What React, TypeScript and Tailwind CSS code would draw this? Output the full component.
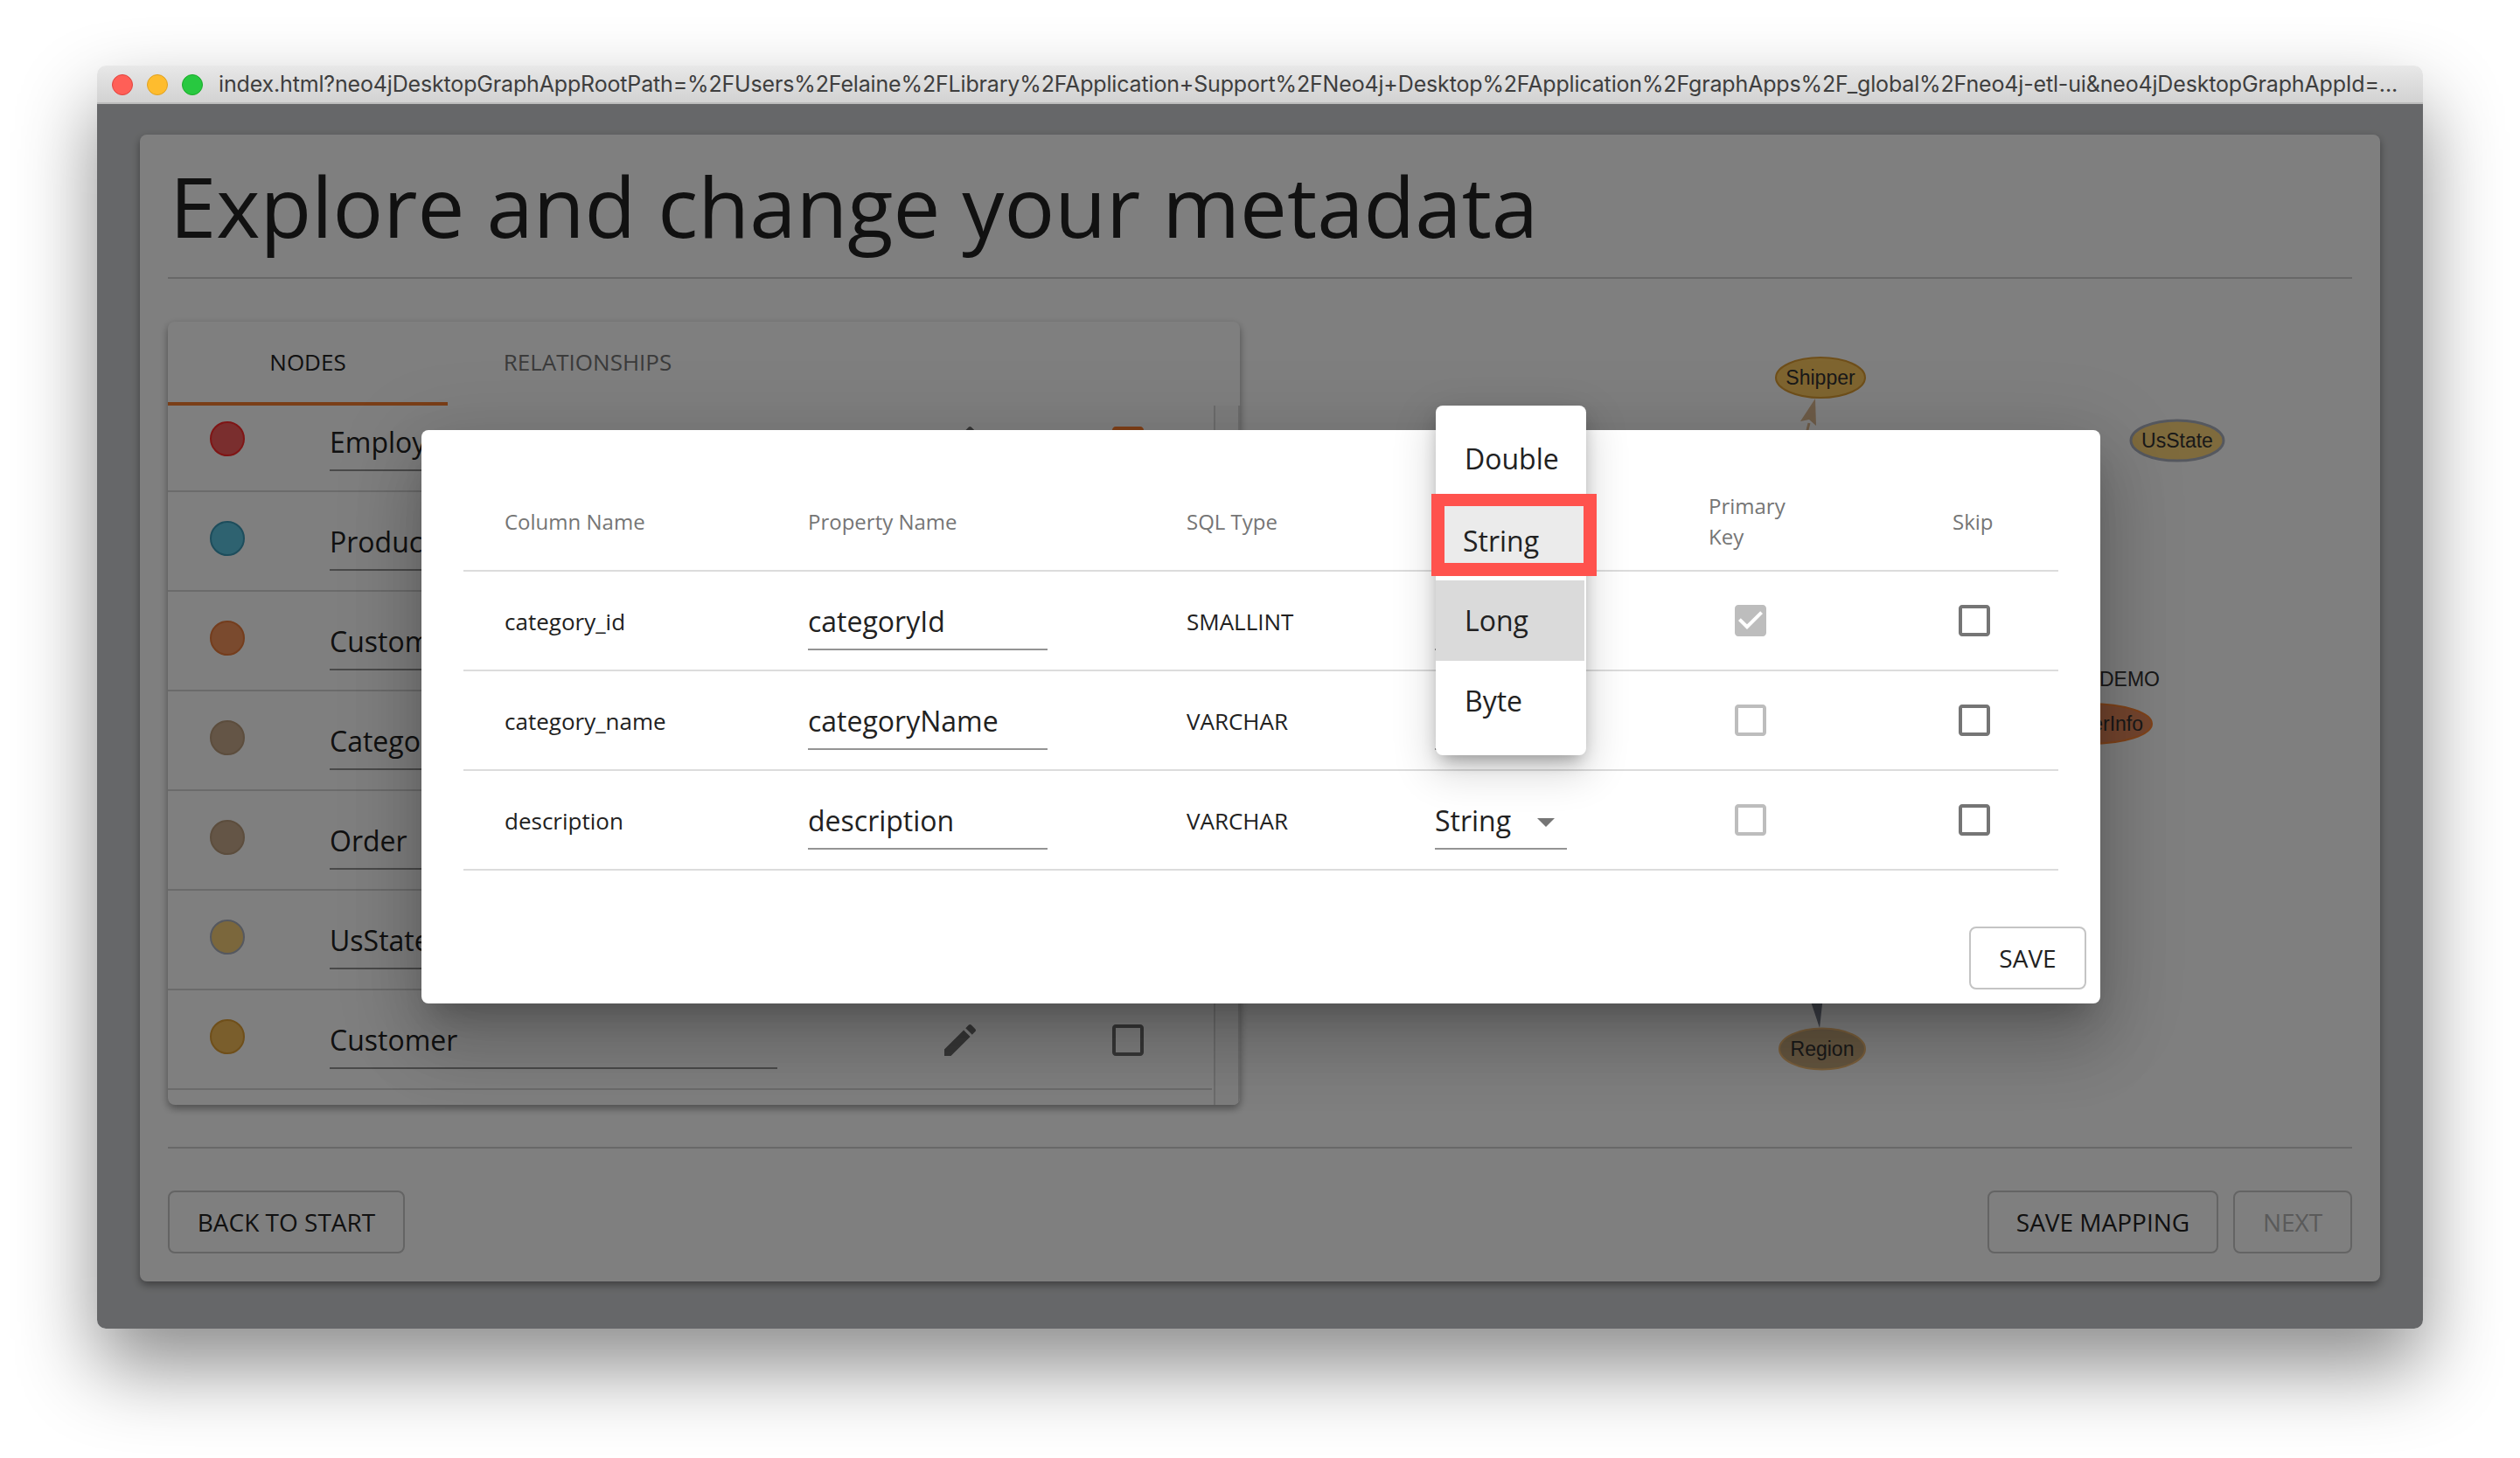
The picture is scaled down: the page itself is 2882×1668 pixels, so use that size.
const nodes = [
  { name: 'Employee', dot: 'bg-[#f45c5c] border-[#ff2a2a]', checked: true },
  { name: 'Product', dot: 'bg-[#5cc4e0] border-[#3a9ab8]', checked: false },
  { name: 'CustomerInfo', dot: 'bg-[#f4945c] border-[#e87a3a]', checked: false },
  { name: 'Category', dot: 'bg-[#c8aa8c] border-[#b89a7a]', checked: false },
  { name: 'Order', dot: 'bg-[#c8aa8c] border-[#b89a7a]', checked: false },
  { name: 'UsState', dot: 'bg-[#f6cf78] border-[#aab0be]', checked: false },
  { name: 'Customer', dot: 'bg-[#f5bc58] border-[#de9e34]', checked: false },
]

const columns = [
  { column: 'category_id', property: 'categoryId', sql: 'SMALLINT', primary: true },
  { column: 'category_name', property: 'categoryName', sql: 'VARCHAR', primary: false },
  { column: 'description', property: 'description', sql: 'VARCHAR', primary: false },
]

const EMPTY_BOX = 'M19 5v14H5V5h14m0-2H5c-1.1 0-2 .9-2 2v14c0 1.1.9 2 2 2h14c1.1 0 2-.9 2-2V5c0-1.1-.9-2-2-2z'
const CHECKED_BOX = 'M19 3H5c-1.11 0-2 .9-2 2v14c0 1.1.89 2 2 2h14c1.11 0 2-.89 2-2V5c0-1.1-.89-2-2-2zm-9 14l-5-5 1.41-1.41L10 14.17l7.59-7.59L19 8l-9 9z'
const PENCIL = 'M3 17.25V21h3.75L17.81 9.94l-3.75-3.75L3 17.25zM20.71 7.04c.39-.39.39-1.02 0-1.41l-2.34-2.34c-.39-.39-1.02-.39-1.41 0l-1.83 1.83 3.75 3.75 1.83-1.83z'

function Icon({ d, className }: { d: string; className: string }) {
  return (
    <svg viewBox="0 0 24 24" className={`h-[48px] w-[48px] shrink-0 fill-current ${className}`}>
      <path d={d} />
    </svg>
  )
}

function Graph() {
  return (
    <svg viewBox="1418 368 1272 896" className="h-[896px] w-[1272px] shrink-0 font-['Liberation_Sans',sans-serif] text-[23px]">
      <path d="M2069 484L2065 500" stroke="#dcb890" strokeWidth="3" />
      <path d="M2076 456L2059 482L2069 480L2077 487Z" fill="#dcb890" />
      <ellipse cx="2082" cy="432" rx="51" ry="23" fill="#ffca60" stroke="#de9e34" strokeWidth="2" />
      <text x="2082" y="440" textAnchor="middle" fill="#333">Shipper</text>
      <ellipse cx="2490" cy="504" rx="53" ry="23" fill="#fed67a" stroke="#aab0be" strokeWidth="3" />
      <text x="2490" y="512" textAnchor="middle" fill="#333">UsState</text>
      <text x="2470" y="785" textAnchor="end" fill="#333">DEMO</text>
      <ellipse cx="2390" cy="828" rx="71" ry="23" fill="#e88a5c" stroke="#ff8634" strokeWidth="2" />
      <text x="2382" y="836" textAnchor="middle" fill="#333">CustomerInfo</text>
      <path d="M2081 1176L2069 1140L2085 1140Z" fill="#7a808e" />
      <ellipse cx="2084" cy="1200" rx="49" ry="23.5" fill="#c8aa7e" stroke="#f4be78" strokeWidth="2" />
      <text x="2084" y="1208" textAnchor="middle" fill="#333">Region</text>
    </svg>
  )
}

function NodePanel() {
  return (
    <div className="h-[896px] w-[1226px] shrink-0 overflow-hidden rounded-[8px] bg-white shadow-[0_4px_10px_rgba(0,0,0,0.4)]">
      <div className="flex h-[96px]">
        <div className="flex h-[96px] w-[320px] items-center justify-center border-b-4 border-[#f57c2e] text-[26px] text-[#222]">NODES</div>
        <div className="flex h-[96px] w-[320px] items-center justify-center pb-[4px] text-[26px] text-[#777]">RELATIONSHIPS</div>
      </div>
      <div className="flex h-[800px]">
        <div className="h-[783px] w-[1194px] overflow-hidden">
          <div className="-mt-[15px]">
            {nodes.map(node => (
              <div key={node.name} className="flex h-[114px] items-start border-b-2 border-[#d6d6d6]">
                <div className={`ml-[48px] mt-[33px] h-[40px] w-[40px] shrink-0 rounded-full border-2 ${node.dot}`} />
                <div className="ml-[97px] mt-[33px] h-[57px] w-[512px] shrink-0 border-b-2 border-[#949494] text-[32px] leading-[48px] text-[#222]">{node.name}</div>
                <div className="ml-[185px] mt-[33px]"><Icon d={PENCIL} className="text-[#6e6e6e]" /></div>
                <div className="ml-[144px] mt-[33px]">
                  <Icon d={node.checked ? CHECKED_BOX : EMPTY_BOX} className={node.checked ? 'text-[#fe7e2e]' : 'text-[#6e6e6e]'} />
                </div>
              </div>
            ))}
          </div>
        </div>
        <div className="ml-[2px] h-full w-[30px] border-x-2 border-[#d8d8d8] bg-[#fafafa]" />
      </div>
    </div>
  )
}

function TypeMenu() {
  return (
    <div className="absolute left-[1160px] -top-[28px] h-[400px] w-[172px] rounded-[8px] bg-white py-[16px] text-[32px] text-[#212121] shadow-[0_10px_20px_-6px_rgba(0,0,0,0.35),0_16px_48px_4px_rgba(0,0,0,0.16)]">
      <div className="flex h-[92px] items-center pl-[33px] pb-[2px]">Double</div>
      <div className="h-[92px]" />
      <div className="flex h-[92px] w-[170px] items-center bg-[#dadada] pl-[33px]">Long</div>
      <div className="flex h-[92px] items-center pl-[33px]">Byte</div>
      <div className="absolute -left-[5px] top-[101px] h-[94px] w-[189px] border-x-[15px] border-b-[15px] border-t-[14px] border-[#ff524d] bg-[#ebebeb] pl-[21px] pt-[16px] leading-[48px]">String</div>
    </div>
  )
}

function MappingDialog() {
  const rowGrid = 'grid h-[114px] grid-cols-[347px_433px_284px_313px_279px_121px] items-center border-b-2 border-[#dcdcdc] pl-[47px]'
  return (
    <div className="relative ml-[2px] mt-[1px] h-[656px] w-[1920px] rounded-[8px] bg-white pt-[48px] shadow-[0_22px_30px_-14px_rgba(0,0,0,0.2),0_48px_76px_6px_rgba(0,0,0,0.14),0_18px_92px_16px_rgba(0,0,0,0.12)]">
      <div className="mx-[48px]">
        <div className={`${rowGrid} text-[24px] leading-[35px] text-[#757575]`}>
          <div>Column Name</div>
          <div>Property Name</div>
          <div>SQL Type</div>
          <div />
          <div>Primary<br />Key</div>
          <div>Skip</div>
        </div>
        {columns.map(col => (
          <div key={col.column} className={`${rowGrid} text-[26px] text-[#212121]`}>
            <div className="pt-[2px]">{col.column}</div>
            <div className="mt-[4px] h-[64px] w-[274px] border-b-2 border-[#949494] pt-[7px] text-[32px] leading-[48px]">{col.property}</div>
            <div className="pt-[2px]">{col.sql}</div>
            <div className="mt-[4px] flex h-[64px] w-[151px] justify-between border-b-2 border-[#949494] pr-[14px] pt-[7px] text-[32px] leading-[48px]">
              String
              <div className="mt-[21px] h-0 w-0 border-x-[10px] border-t-[10px] border-x-transparent border-t-[#757575]" />
            </div>
            <div className="ml-[24px]"><Icon d={col.primary ? CHECKED_BOX : EMPTY_BOX} className="text-[#bdbdbd]" /></div>
            <div className="ml-[1px]"><Icon d={EMPTY_BOX} className="text-[#757575]" /></div>
          </div>
        ))}
      </div>
      <div className="mt-[64px] flex justify-end pr-[16px]">
        <button className="h-[72px] w-[134px] rounded-[8px] border-2 border-[#c4c4c4] text-[28px] text-[#212121]">SAVE</button>
      </div>
      <TypeMenu />
    </div>
  )
}

export default function App() {
  return (
    <div className="h-[1668px] w-[2882px] overflow-hidden bg-white pl-[111px] pt-[75px] font-['Open_Sans',sans-serif]">
      <div className="flex h-[1445px] w-[2660px] flex-col overflow-hidden rounded-[10px] shadow-[0_44px_90px_rgba(0,0,0,0.45)]">
        <div className="flex h-[44px] shrink-0 items-center gap-[16px] border-b-2 border-[#bdbdbd] bg-gradient-to-b from-[#e8e8e8] to-[#d2d2d2] pl-[17px] pt-[2px]">
          <div className="h-[24px] w-[24px] rounded-full border border-[#e0443e] bg-[#ff5f57]" />
          <div className="h-[24px] w-[24px] rounded-full border border-[#dea123] bg-[#febc2e]" />
          <div className="h-[24px] w-[24px] rounded-full border border-[#1aab29] bg-[#28c840]" />
          <div className="ml-[2px] whitespace-nowrap font-['Inter',sans-serif] text-[25px] tracking-[-0.16px] text-[#3e3e3e]">
            index.html?neo4jDesktopGraphAppRootPath=%2FUsers%2Felaine%2FLibrary%2FApplication+Support%2FNeo4j+Desktop%2FApplication%2FgraphApps%2F_global%2Fneo4j-etl-ui&amp;neo4jDesktopGraphAppId=...
          </div>
        </div>
        <div className="relative flex-1 bg-[#cdcfd2] pl-[49px] pt-[35px]">
          <div className="h-[1312px] w-[2562px] rounded-[8px] bg-white px-[32px] shadow-[0_4px_10px_rgba(0,0,0,0.4)]">
            <div className="h-[165px] border-b-2 border-[#d0d0d0] pl-[2px] pt-[21px] text-[96px] leading-[120px] text-[#222]">
              Explore and change your metadata
            </div>
            <div className="mt-[49px] flex">
              <NodePanel />
              <Graph />
            </div>
            <div className="mt-[48px] flex justify-between border-t-2 border-[#d0d0d0] pt-[48px]">
              <button className="h-[72px] w-[271px] rounded-[8px] border-2 border-[#c8c8c8] text-[28px] text-[#222]">BACK TO START</button>
              <div className="flex gap-[17px]">
                <button className="h-[72px] w-[264px] rounded-[8px] border-2 border-[#c8c8c8] text-[28px] text-[#222]">SAVE MAPPING</button>
                <button className="h-[72px] w-[136px] rounded-[8px] border-2 border-[#c8c8c8] text-[28px] text-[#b4b4b4]">NEXT</button>
              </div>
            </div>
          </div>
          <div className="absolute inset-0 flex items-center justify-center bg-black/50">
            <MappingDialog />
          </div>
        </div>
      </div>
    </div>
  )
}
